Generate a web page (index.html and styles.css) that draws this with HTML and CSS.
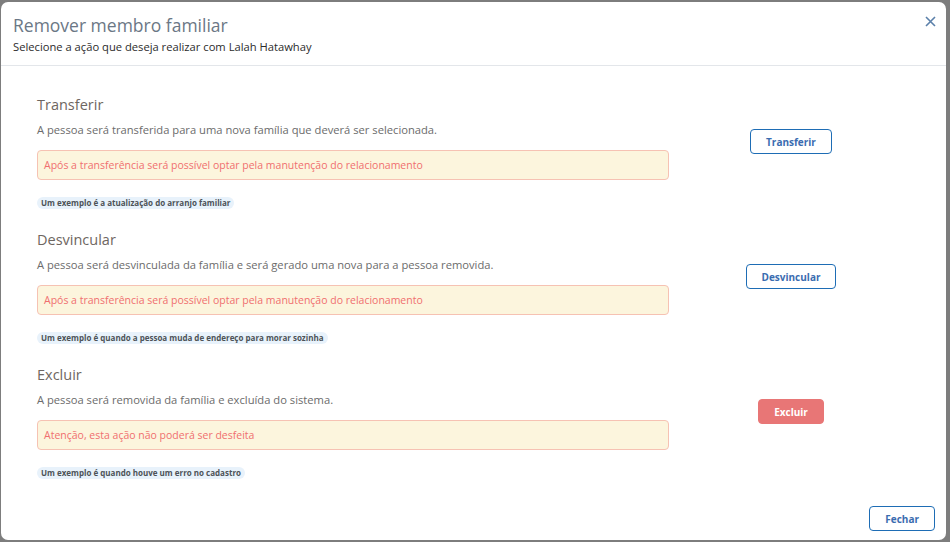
FILE: index.html
```html
<!DOCTYPE html>
<html lang="pt-BR">
<head>
  <meta charset="UTF-8" />
  <meta name="viewport" content="width=device-width, initial-scale=1.0"/>
  <title>Remover membro familiar</title>
  <link rel="stylesheet" href="styles.css">
</head>
<body>

  <!-- Modal -->
  <div class="modal">
    <div class="modal-header">
      <div>
        <h1 class="modal-title">Remover membro familiar</h1>
        <p class="modal-subtitle">Selecione a ação que deseja realizar com Lalah Hatawhay</p>
      </div>
      <button class="close-btn" aria-label="Fechar">
        <svg width="11" height="11" viewBox="0 0 11 11">
          <path d="M1 1 L10 10 M10 1 L1 10" stroke="#5b80aa" stroke-width="1.6" fill="none"/>
        </svg>
      </button>
    </div>

    <div class="modal-body">
      <div class="action">
        <div class="action-info">
          <h2>Transferir</h2>
          <p class="desc">A pessoa será transferida para uma nova família que deverá ser selecionada.</p>
          <div class="alert">Após a transferência será possível optar pela manutenção do relacionamento</div>
          <span class="badge">Um exemplo é a atualização do arranjo familiar</span>
        </div>
        <div class="action-btn">
          <button class="btn btn-outline">Transferir</button>
        </div>
      </div>

      <div class="action">
        <div class="action-info">
          <h2>Desvincular</h2>
          <p class="desc">A pessoa será desvinculada da família e será gerado uma nova para a pessoa removida.</p>
          <div class="alert">Após a transferência será possível optar pela manutenção do relacionamento</div>
          <span class="badge">Um exemplo é quando a pessoa muda de endereço para morar sozinha</span>
        </div>
        <div class="action-btn">
          <button class="btn btn-outline">Desvincular</button>
        </div>
      </div>

      <div class="action">
        <div class="action-info">
          <h2>Excluir</h2>
          <p class="desc">A pessoa será removida da família e excluída do sistema.</p>
          <div class="alert">Atenção, esta ação não poderá ser desfeita</div>
          <span class="badge">Um exemplo é quando houve um erro no cadastro</span>
        </div>
        <div class="action-btn">
          <button class="btn btn-danger">Excluir</button>
        </div>
      </div>
    </div>

    <div class="modal-footer">
      <button class="btn btn-outline">Fechar</button>
    </div>
  </div>

</body>
</html>
```

FILE: styles.css
```css
html, body {
  height: 100%;
}

body {
  margin: 0;
  background-color: #7d7d7d;
  font-family: "Open Sans", Arial, sans-serif;
  padding: 2px 4px 2px 1px;
  box-sizing: border-box;
}

/* Modal box */
.modal {
  background: #fff;
  border-radius: 7px;
  height: 538px;
  display: flex;
  flex-direction: column;
}

.modal-header {
  display: flex;
  justify-content: space-between;
  align-items: flex-start;
  padding: 11px 12px 10px 12px;
  border-bottom: 1px solid #e3e6ea;
}

.modal-title {
  margin: 0;
  font-size: 17.5px;
  font-weight: 400;
  color: #6b7785;
  line-height: 24px;
}

.modal-subtitle {
  margin: 2px 0 0 0;
  font-size: 11.2px;
  color: #2b2b2b;
  line-height: 16px;
}

.close-btn {
  background: none;
  border: none;
  padding: 0;
  margin: 2px -2px 0 0;
  cursor: pointer;
}

/* Body */
.modal-body {
  flex: 1;
  padding: 29px 0 0 36px;
}

.action {
  display: flex;
  height: 135px;
}

.action-info {
  width: 632px;
}

.action h2 {
  margin: 0;
  font-size: 14.5px;
  font-weight: 400;
  color: #6e6661;
  line-height: 20px;
}

.desc {
  margin: 6px 0 0 0;
  font-size: 11.2px;
  color: #6b6b6b;
  line-height: 17px;
}

.alert {
  margin-top: 12px;
  height: 28px;
  line-height: 28px;
  background-color: #fcf5dd;
  border: 1px solid #f6c2b3;
  border-radius: 4px;
  color: #f06f6f;
  font-size: 10.5px;
  padding-left: 6px;
}

.badge {
  display: inline-block;
  margin-top: 17px;
  background-color: #e8f2fb;
  color: #4d5358;
  font-size: 8px;
  font-weight: 700;
  line-height: 12px;
  padding: 0 4px;
  border-radius: 7px;
}

.action-btn {
  width: 244px;
  display: flex;
  justify-content: center;
  align-items: flex-start;
  padding-top: 34px;
}

/* Buttons */
.btn {
  font-family: "Open Sans", Arial, sans-serif;
  font-size: 10px;
  font-weight: 700;
  height: 25px;
  padding: 0 15px;
  border-radius: 4px;
  cursor: pointer;
}

.btn-outline {
  background: #fff;
  border: 1px solid #1e6db5;
  color: #3a6cb0;
}

.btn-danger {
  background: #e87676;
  border: 1px solid #e87676;
  color: #fff;
}

.modal-footer {
  display: flex;
  justify-content: flex-end;
  padding: 0 11px 9px 0;
}
```
